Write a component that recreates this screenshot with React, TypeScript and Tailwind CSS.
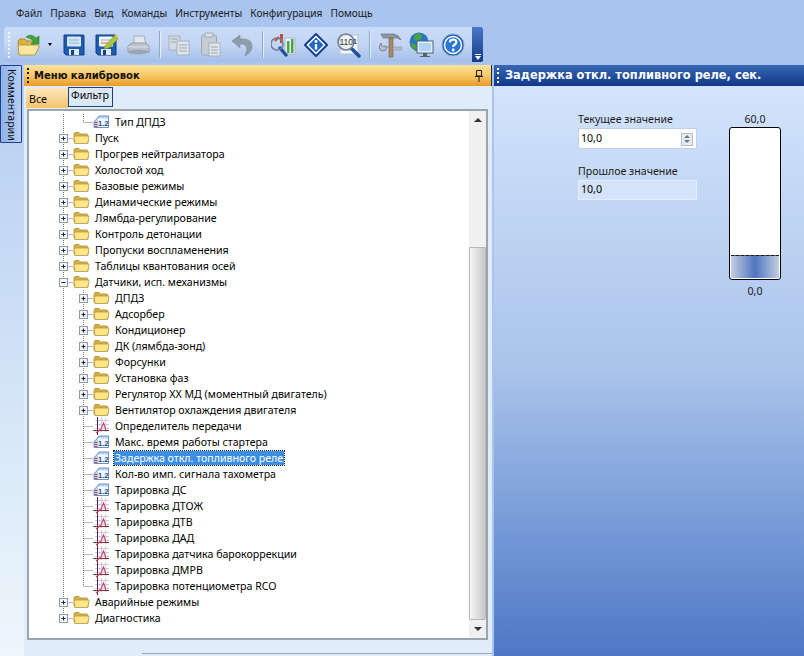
import React from 'react';

type Kind = 'folder' | 'num' | 'chart';

type Row = {
  label: string;
  level: 1 | 2;
  kind: Kind;
  open?: boolean;
  last?: boolean;
  selected?: boolean;
};

const menu = ['Файл', 'Правка', 'Вид', 'Команды', 'Инструменты', 'Конфигурация', 'Помощь'];

const rows: Row[] = [
  { label: 'Тип ДПДЗ', level: 2, kind: 'num', last: true },
  { label: 'Пуск', level: 1, kind: 'folder' },
  { label: 'Прогрев нейтрализатора', level: 1, kind: 'folder' },
  { label: 'Холостой ход', level: 1, kind: 'folder' },
  { label: 'Базовые режимы', level: 1, kind: 'folder' },
  { label: 'Динамические режимы', level: 1, kind: 'folder' },
  { label: 'Лямбда-регулирование', level: 1, kind: 'folder' },
  { label: 'Контроль детонации', level: 1, kind: 'folder' },
  { label: 'Пропуски воспламенения', level: 1, kind: 'folder' },
  { label: 'Таблицы квантования осей', level: 1, kind: 'folder' },
  { label: 'Датчики, исп. механизмы', level: 1, kind: 'folder', open: true },
  { label: 'ДПДЗ', level: 2, kind: 'folder' },
  { label: 'Адсорбер', level: 2, kind: 'folder' },
  { label: 'Кондиционер', level: 2, kind: 'folder' },
  { label: 'ДК (лямбда-зонд)', level: 2, kind: 'folder' },
  { label: 'Форсунки', level: 2, kind: 'folder' },
  { label: 'Установка фаз', level: 2, kind: 'folder' },
  { label: 'Регулятор ХХ МД (моментный двигатель)', level: 2, kind: 'folder' },
  { label: 'Вентилятор охлаждения двигателя', level: 2, kind: 'folder' },
  { label: 'Определитель передачи', level: 2, kind: 'chart' },
  { label: 'Макс. время работы стартера', level: 2, kind: 'num' },
  { label: 'Задержка откл. топливного реле', level: 2, kind: 'num', selected: true },
  { label: 'Кол-во имп. сигнала тахометра', level: 2, kind: 'num' },
  { label: 'Тарировка ДС', level: 2, kind: 'num' },
  { label: 'Тарировка ДТОЖ', level: 2, kind: 'chart' },
  { label: 'Тарировка ДТВ', level: 2, kind: 'chart' },
  { label: 'Тарировка ДАД', level: 2, kind: 'chart' },
  { label: 'Тарировка датчика барокоррекции', level: 2, kind: 'chart' },
  { label: 'Тарировка ДМРВ', level: 2, kind: 'chart' },
  { label: 'Тарировка потенциометра RCO', level: 2, kind: 'chart', last: true },
  { label: 'Аварийные режимы', level: 1, kind: 'folder' },
  { label: 'Диагностика', level: 1, kind: 'folder', last: true },
];

function Folder() {
  return (
    <svg width="17" height="16" viewBox="0 0 17 16" className="shrink-0">
      <path d="M1 4 L2 2.5 H6 L7.5 4 H14 L15 5.5 V13 H2 L1 12 Z" fill="#d9b23f" stroke="#a98a35" strokeWidth="0.8" />
      <path d="M2 13.5 L1 7.5 Q1 6 3 6 H15 Q16.5 6 16 7.5 L14.5 13.5 Z" fill="#fde68a" stroke="#b39a45" strokeWidth="0.8" />
    </svg>
  );
}

function NumIcon() {
  return (
    <svg width="16" height="16" viewBox="0 0 16 16" className="shrink-0">
      <path d="M1 13.5 L1 8 L6 2 H15.5 V13.5 Z" fill="#bcd6f2" stroke="#5f84bc" strokeWidth="0.9" />
      <rect x="5" y="4.5" width="10" height="8.5" fill="#f4f8fd" />
      <path d="M1.5 8.5 H4.5 M1.5 10.5 H4.5 M1.5 12.5 H4.5" stroke="#c2485a" strokeWidth="1" />
      <text x="5" y="11.8" fontSize="7.5" fontWeight="700" fontFamily="Liberation Sans, sans-serif" fill="#1f3f90">1.2</text>
    </svg>
  );
}

function ChartIcon() {
  return (
    <svg width="16" height="20" viewBox="0 0 16 20" className="shrink-0 -my-[2px]">
      <path d="M2 4.5 H16 M2 8.5 H16 M2 12.5 H16 M8.5 2 V16 M12.5 2 V16" stroke="#cbbfea" strokeWidth="0.9" />
      <path d="M4.5 1 V19" stroke="#4c2a48" strokeWidth="1" />
      <path d="M0 14.5 H16" stroke="#7a2f44" strokeWidth="1" />
      <path d="M3 17 L8 13 L10.5 7 L13 14" fill="none" stroke="#e03a4c" strokeWidth="1.1" />
    </svg>
  );
}

function Guides({ level, kind, open, last }: { level: 1 | 2; kind: Kind; open?: boolean; last?: boolean }) {
  // x positions are measured from the tree's left edge
  const nested = level === 2;
  const w = nested ? 64 : 44;
  const cx = nested ? 54.5 : 34.5;
  const hasBox = kind === 'folder';
  return (
    <svg width={w} height="16" viewBox={`0 0 ${w} 16`} className="shrink-0">
      <g stroke="#777" strokeWidth="1" strokeDasharray="1 1" fill="none">
        {nested && <path d="M34.5 0 V16" />}
        <path d={last ? `M${cx} 0 V8` : `M${cx} 0 V16`} />
        <path d={`M${cx} 8.5 H${w}`} />
      </g>
      {hasBox && (
        <g>
          <rect x={cx - 4} y="4.5" width="8" height="8" fill="#f4f4f0" stroke="#8a9bb0" strokeWidth="1" />
          <path d={`M${cx - 2} 8.5 H${cx + 2}`} stroke="#222" strokeWidth="1" />
          {!open && <path d={`M${cx} 6.5 V10.5`} stroke="#222" strokeWidth="1" />}
        </g>
      )}
    </svg>
  );
}

function TreeRow({ row }: { row: Row }) {
  return (
    <div className="flex h-[16px] items-center">
      <Guides level={row.level} kind={row.kind} open={row.open} last={row.last} />
      {row.kind === 'folder' && <Folder />}
      {row.kind === 'num' && <NumIcon />}
      {row.kind === 'chart' && <ChartIcon />}
      <span
        className={
          row.selected
            ? 'ml-[5px] whitespace-nowrap bg-[#3d8ee0] px-px text-white outline-1 outline-dotted outline-[#1b2a44] leading-[14px]'
            : row.kind === 'folder'
              ? 'ml-[5px] whitespace-nowrap text-black leading-[14px]'
              : 'ml-[6px] whitespace-nowrap text-black leading-[14px]'
        }
      >
        {row.label}
      </span>
    </div>
  );
}

function Grip({ light }: { light?: boolean }) {
  return (
    <div className="flex h-[16px] w-[3px] shrink-0 flex-col justify-between">
      {[0, 1, 2, 3].map(i => (
        <span key={i} className={light ? 'h-[2px] w-[2px] bg-white' : 'h-[2px] w-[2px] bg-[#1c1c1c]'} />
      ))}
    </div>
  );
}

function Sep() {
  return <div className="h-[27px] w-px shrink-0 bg-[#8ea6c8] shadow-[1px_0_0_#e6eefb]" />;
}

const OpenIcon = () => (
  <svg width="24" height="26" viewBox="0 0 24 26">
    <path d="M1 9 L3 7 H8 L10 9 H17 V22 H2 Z" fill="#d9b23f" stroke="#a98a35" />
    <path d="M2 23 L1 13 H20 Q23 13 22 15 L18 23 Z" fill="#fbe8a0" stroke="#b39a45" />
    <path d="M9 5 Q14 1 19 6 L22 4 V12 H14 L17 9 Q13 6 9 5 Z" fill="#3fa33a" stroke="#23752a" strokeWidth="0.6" />
  </svg>
);

const SaveIcon = ({ pencil }: { pencil?: boolean }) => (
  <svg width="24" height="24" viewBox="0 0 24 24">
    <path d="M2 2 H21 Q22 2 22 3 V22 H4 L2 20 Z" fill="#1c5db0" stroke="#123f86" />
    <rect x="5" y="3.5" width="14" height="10" rx="1" fill={pencil ? '#f4f6fa' : '#d7e6f7'} />
    <path d="M7 7 H17" stroke="#8bb0d8" strokeWidth="1" />
    <path d="M7 10 H17" stroke={pencil ? '#d85a30' : '#8bb0d8'} strokeWidth="1" />
    <rect x="7" y="16" width="10" height="6" fill="#dfe7f0" />
    <rect x="9" y="17" width="3" height="5" fill="#123f86" />
    {pencil && (
      <g>
        <path d="M11 13 L20 3 L24 6 L15 15 L10 16 Z" fill="#a9c83a" stroke="#6c8a20" strokeWidth="0.6" />
        <path d="M20 3 L22 1 L25 4 L24 6 Z" fill="#e8c04a" />
      </g>
    )}
  </svg>
);

const PrinterIcon = () => (
  <svg width="24" height="24" viewBox="0 0 24 24">
    <path d="M8 3 H18 L20 11 H8 Z" fill="#e4e8ee" stroke="#a2adba" />
    <path d="M2 13 L6 10 H20 L23 13 V19 H2 Z" fill="#bcc4cf" stroke="#8f9aa8" />
    <path d="M2 14 H23" stroke="#dbe0e6" />
    <ellipse cx="12" cy="19" rx="10" ry="2.5" fill="#9aa5b2" />
  </svg>
);

const CopyIcon = () => (
  <svg width="22" height="24" viewBox="0 0 22 24">
    <rect x="1" y="3" width="11" height="14" fill="#d4dbe3" stroke="#a7b0bc" />
    <rect x="9" y="8" width="12" height="14" fill="#e2e6eb" stroke="#a7b0bc" />
    <path d="M11 12 H19 M11 15 H19 M11 18 H19 M3 6 H10 M3 9 H8" stroke="#98a3b0" />
  </svg>
);

const PasteIcon = () => (
  <svg width="21" height="26" viewBox="0 0 21 26">
    <rect x="1.5" y="3" width="15" height="20" rx="2" fill="#c4ccd6" stroke="#9ea8b5" />
    <rect x="5" y="1" width="8" height="4" rx="1" fill="#dfe3e8" stroke="#9ea8b5" />
    <rect x="9" y="11" width="11" height="13" fill="#e2e6eb" stroke="#a7b0bc" />
    <path d="M11 15 H18 M11 18 H18 M11 21 H18" stroke="#98a3b0" />
  </svg>
);

const UndoIcon = () => (
  <svg width="22" height="24" viewBox="0 0 22 24">
    <path d="M1 7 L9 14 V10 Q16 9 16 16 L14 22 Q22 17 21 11 Q20 4 9 5 V1 Z" transform="translate(0 1)" fill="#8f9cab" stroke="#7b8898" strokeWidth="0.6" />
  </svg>
);

const Lens = () => (
  <g>
    <path d="M16 17 L23 24" stroke="#1d4e9c" strokeWidth="3.4" strokeLinecap="round" />
    <circle cx="10" cy="10" r="8" fill="#eef3fa" fillOpacity="0.6" stroke="#6f7f92" strokeWidth="1.6" />
  </g>
);

const ChartLensIcon = () => (
  <svg width="25" height="26" viewBox="0 0 25 26">
    <rect x="14" y="6" width="10" height="16" fill="#eef3fa" stroke="#a7b7cc" />
    <rect x="16" y="9" width="2.5" height="12" fill="#48a83f" />
    <rect x="20" y="7" width="2.5" height="14" fill="#48a83f" />
    <rect x="9" y="2" width="3" height="9" fill="#c94a3a" />
    <path d="M4 9 L8 5" stroke="#c94a3a" strokeWidth="2" />
    <g transform="translate(-1 3)"><path d="M10 13 L16 20" stroke="#1d4e9c" strokeWidth="3.4" strokeLinecap="round" /><circle cx="7" cy="9" r="6" fill="none" stroke="#6f7f92" strokeWidth="1.6" /></g>
  </svg>
);

const InfoIcon = () => (
  <svg width="24" height="24" viewBox="0 0 24 24">
    <path d="M12 1 L23 12 L12 23 L1 12 Z" fill="#fff" stroke="#173f92" strokeWidth="2" strokeLinejoin="round" />
    <path d="M12 4.5 L19.5 12 L12 19.5 L4.5 12 Z" fill="#2266c4" />
    <circle cx="12" cy="8.5" r="1.4" fill="#fff" />
    <path d="M12 11 V16.5" stroke="#fff" strokeWidth="2.4" />
  </svg>
);

const BinaryLensIcon = () => (
  <svg width="25" height="26" viewBox="0 0 25 26">
    <rect x="4" y="3" width="18" height="19" fill="#f3f6fb" stroke="#b4c2d4" />
    <Lens />
    <text x="3.5" y="13" fontSize="8.5" fontFamily="Liberation Sans, sans-serif" fill="#333">110</text>
    <text x="17" y="12" fontSize="8" fontFamily="Liberation Sans, sans-serif" fill="#333">1</text>
  </svg>
);

const ToolsIcon = () => (
  <svg width="24" height="26" viewBox="0 0 24 26">
    <path d="M3 2 H16 Q21 3 23 8 Q19 5 15 6 H5 Z" fill="#8d97a2" stroke="#5f6a76" strokeWidth="0.6" />
    <path d="M11 6 H15 V25 H11 Z" fill="#a88a6a" stroke="#6e5a45" strokeWidth="0.6" />
    <path d="M15 15 H24 V18 H15 Z" fill="#b6bec8" stroke="#7c8793" strokeWidth="0.5" />
    <path d="M11 15 H7 M3 11 Q0 14 2 18 Q5 20 8 18 V14 Q5 15 4 14 Z" fill="#b6bec8" stroke="#7c8793" />
  </svg>
);

const GlobeIcon = () => (
  <svg width="25" height="26" viewBox="0 0 25 26">
    <circle cx="10" cy="10" r="9.5" fill="#2a74c4" />
    <path d="M5 3 Q10 0 13 3 L12 7 L7 9 L5 7 Z M1 11 L6 12 L9 17 L5 18 Z" fill="#49a43d" />
    <rect x="8" y="9" width="16" height="12" fill="#e4f0fb" stroke="#4f6479" />
    <rect x="10" y="11" width="12" height="8" fill="#aed5f5" />
    <path d="M14 21 H18 V24 H21 V25 H11 V24 H14 Z" fill="#55616e" />
  </svg>
);

const HelpIcon = () => (
  <svg width="24" height="24" viewBox="0 0 24 24">
    <circle cx="12" cy="12" r="11" fill="#1f5cb4" stroke="#8aaadc" strokeWidth="1" />
    <circle cx="12" cy="12" r="8.5" fill="#2a78d6" stroke="#fff" strokeWidth="1.5" />
    <path d="M8.8 9.3 Q9 6.5 12.2 6.5 Q15.4 6.6 15.3 9.2 Q15.2 10.8 13.4 11.8 Q12.2 12.5 12.2 14" fill="none" stroke="#fff" strokeWidth="2.2" />
    <circle cx="12.2" cy="17" r="1.4" fill="#fff" />
  </svg>
);

export default function App() {
  return (
    <div className="flex h-[656px] w-[804px] flex-col overflow-hidden bg-[#a9c4ee] font-['Noto_Sans',sans-serif] text-[10.6px] text-black">
      {/* Menu */}
      <div className="flex h-[27px] items-center gap-[8px] pl-[16px] text-[10.2px] text-[#1a1a1a]">
        {menu.map(m => (
          <span key={m} className="whitespace-nowrap">{m}</span>
        ))}
      </div>

      {/* Toolbar */}
      <div className="ml-[4px] flex h-[35px] w-[479px] rounded-l-[3px] bg-gradient-to-b from-[#c9dbf6] via-[#c3d6f4] to-[#a3bfe9]">
        <div className="flex flex-1 items-center pl-[4px]">
          <div className="flex h-[26px] w-[3px] flex-col justify-between">
            {[0, 1, 2, 3, 4, 5, 6].map(i => (
              <span key={i} className="h-[2px] w-[2px] bg-[#f4f7fc]" />
            ))}
          </div>
          <div className="ml-[6px] flex items-center"><OpenIcon /></div>
          <div className="ml-[7px] h-0 w-0 border-x-[2.5px] border-t-[3px] border-x-transparent border-t-black" />
          <div className="ml-[10px] flex items-center gap-[8px]">
            <SaveIcon />
            <SaveIcon pencil />
            <PrinterIcon />
          </div>
          <div className="ml-[9px]"><Sep /></div>
          <div className="ml-[8px] flex items-center gap-[10px]">
            <CopyIcon />
            <PasteIcon />
            <UndoIcon />
          </div>
          <div className="ml-[9px]"><Sep /></div>
          <div className="ml-[8px] flex items-center gap-[8px]">
            <ChartLensIcon />
            <InfoIcon />
            <BinaryLensIcon />
          </div>
          <div className="ml-[8px]"><Sep /></div>
          <div className="ml-[8px] flex items-center gap-[7px]">
            <ToolsIcon />
            <GlobeIcon />
            <HelpIcon />
          </div>
        </div>
        <div className="flex w-[11px] flex-col items-center justify-end rounded-r-[2px] bg-gradient-to-b from-[#4a78c8] to-[#143a86] pb-[2px]">
          <div className="mb-px h-px w-[6px] bg-white" />
          <div className="h-0 w-0 border-x-[3px] border-t-[4px] border-x-transparent border-t-white" />
        </div>
      </div>

      {/* Main */}
      <div className="mt-[3px] flex min-h-0 flex-1">
        {/* Side strip */}
        <div className="w-[24px] shrink-0 bg-gradient-to-b from-[#b4cdf1] to-[#eef7fc]">
          <div className="flex h-[78px] w-[22px] items-center justify-center rounded-[1px] border border-[#1f3f86] bg-gradient-to-r from-[#8fb2ea] to-[#b7cff3] pt-px">
            <span className="whitespace-nowrap text-[#111] [writing-mode:vertical-rl]">Комментарии</span>
          </div>
        </div>

        {/* Calibration menu */}
        <div className="flex w-[468px] shrink-0 flex-col bg-[#e0edf8]">
          <div className="flex h-[21px] shrink-0 items-center gap-[4px] border-r border-[#1c2a4a] bg-gradient-to-b from-[#fbe39a] via-[#f8c766] to-[#ea9a25] pl-[3px] pr-[6px]">
            <Grip />
            <span className="font-['DejaVu_Sans',sans-serif] text-[10px] font-bold text-[#111]">Меню калибровок</span>
            <svg width="12" height="14" viewBox="0 0 12 14" className="ml-auto">
              <path d="M3.5 1.5 H8.5 V7 H3.5 Z M2 7.5 H10 M6 8 V13" fill="none" stroke="#1c1c1c" strokeWidth="1" />
            </svg>
          </div>

          <div className="flex h-[22px] shrink-0 items-end pl-[2px]">
            <div className="flex h-[20px] w-[42px] items-center bg-gradient-to-b from-[#fbe7bd] to-[#f6c36d] pl-[3px] pt-[3px]">Все</div>
            <div className="mb-px flex h-[20px] w-[45px] items-center border border-[#1f3f86] bg-[#dbe9f7] pl-[2px] pb-[2px]">Фильтр</div>
          </div>

          <div className="ml-[3px] mt-[1px] flex h-[531px] w-[461px] shrink-0 border-2 border-[#9aa6ad] bg-white">
            <div className="min-w-0 flex-1 overflow-hidden pt-[3px]">
              {rows.map(r => (
                <TreeRow key={r.label} row={r} />
              ))}
            </div>
            <div className="flex w-[17px] shrink-0 flex-col bg-[#f0f0f0]">
              <div className="flex h-[17px] items-center justify-center">
                <div className="h-0 w-0 border-x-[4px] border-b-[4px] border-x-transparent border-b-[#333]" />
              </div>
              <div className="mt-[119px] h-[373px] rounded-b-[2px] border border-[#b8b8b8] bg-gradient-to-r from-[#f6f6f6] to-[#c8c8ca]" />
              <div className="flex flex-1 items-center justify-center">
                <div className="h-0 w-0 border-x-[4px] border-t-[4px] border-x-transparent border-t-[#333]" />
              </div>
            </div>
          </div>

          <div className="ml-[118px] mt-[13px] h-px bg-[#9aa5b0]" />
        </div>

        {/* Detail panel */}
        <div className="ml-[2px] flex min-w-0 flex-1 flex-col">
          <div className="flex h-[21px] shrink-0 items-center gap-[5px] bg-gradient-to-b from-[#3a68b4] to-[#10388a] pl-[3px]">
            <Grip light />
            <span className="font-['DejaVu_Sans',sans-serif] text-[11.4px] font-bold text-white">Задержка откл. топливного реле, сек.</span>
          </div>
          <div className="flex flex-1 items-start bg-gradient-to-b from-[#d3e4fc] via-[#a9c3ea] to-[#4e78c6] pl-[84px] pt-[26px]">
            <div className="flex w-[119px] flex-col">
              <span className="h-[16px] leading-[14px] text-[#1a1a1a]">Текущее значение</span>
              <div className="flex h-[21px] items-center justify-between border border-[#bcd0ec] bg-white pl-[2px] pr-[3px] pt-px">
                <span>10,0</span>
                <div className="flex h-[13px] w-[12px] flex-col items-center justify-center gap-[2px] border border-[#b4bcc8] bg-[#e6eaf0]">
                  <div className="h-0 w-0 border-x-[3px] border-b-[3px] border-x-transparent border-b-[#6a7890]" />
                  <div className="h-0 w-0 border-x-[3px] border-t-[3px] border-x-transparent border-t-[#6a7890]" />
                </div>
              </div>
              <span className="mt-[15px] h-[16px] leading-[14px] text-[#1a1a1a]">Прошлое значение</span>
              <div className="flex h-[20px] items-center border border-[#e6eefb] bg-[#d4e3fa] pl-[2px]">10,0</div>
            </div>
            <div className="ml-[32px] flex w-[52px] flex-col items-center">
              <span className="h-[15px] leading-[14px] text-[#1a1a1a]">60,0</span>
              <div className="flex h-[153px] w-[52px] flex-col justify-end overflow-hidden rounded-[3px] border border-black bg-white px-px pb-px">
                <div className="h-[23px] border-t border-dashed border-[#1a1a1a] bg-[#556]">
                  <div className="h-full bg-[linear-gradient(90deg,#c3cde0,#4f76c0_50%,#c3cde0)]" />
                </div>
              </div>
              <span className="mt-[4px] leading-[14px] text-[#1a1a1a]">0,0</span>
            </div>
          </div>
        </div>
      </div>
    </div>
  );
}
